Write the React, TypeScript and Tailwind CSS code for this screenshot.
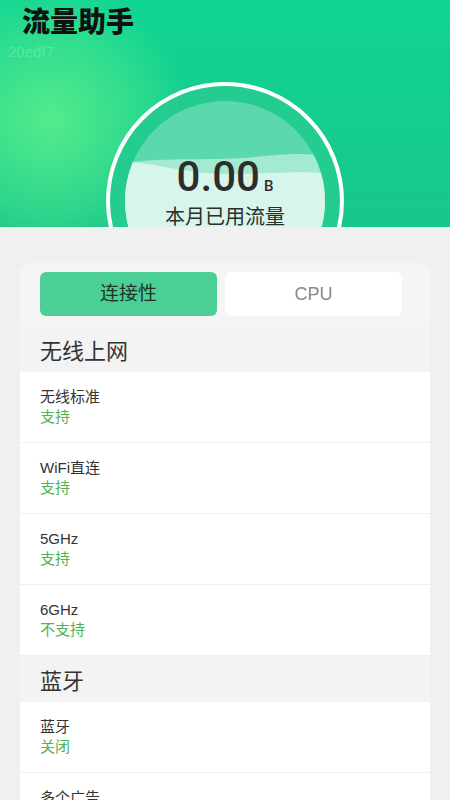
import React from "react";

type Row = { label: string; value: string };

const wifiRows: Row[] = [
  { label: "无线标准", value: "支持" },
  { label: "WiFi直连", value: "支持" },
  { label: "5GHz", value: "支持" },
  { label: "6GHz", value: "不支持" },
];

const btRows: Row[] = [
  { label: "蓝牙", value: "关闭" },
  { label: "多个广告", value: "支持" },
  { label: "低功耗", value: "支持" },
];

function SectionTitle({ title }: { title: string }) {
  return (
    <div className="h-[46px] flex items-center pt-[5px] px-[20px] bg-[#f3f3f3] text-[22px] leading-[28px] text-[#333]">
      {title}
    </div>
  );
}

function InfoRow({ row }: { row: Row }) {
  return (
    <div className="h-[71px] bg-white border-b border-[#f0f0f0] px-[20px] pt-[15px] flex flex-col">
      <div className="text-[15px] leading-[20px] text-[#333]">{row.label}</div>
      <div className="text-[15px] leading-[20px] text-[#4fb34f]">{row.value}</div>
    </div>
  );
}

function Gauge() {
  return (
    <div className="mx-auto w-[238px] h-[238px] shrink-0 rounded-full border-[4px] border-white bg-[#24cc8f] p-[15px]">
      <div className="relative w-full h-full rounded-full overflow-hidden bg-[#5bd8ad]">
        <svg className="absolute inset-0" width="200" height="200" viewBox="0 0 200 200">
          <path
            d="M0,62 C40,56 90,60 130,56 C165,52 188,52 200,56 L200,200 L0,200 Z"
            fill="#a4e9d1"
          />
          <path
            d="M0,60 C30,63 70,73 100,73 C140,73 170,70 200,72 L200,200 L0,200 Z"
            fill="#d7f5ea"
          />
        </svg>
        <div className="relative flex flex-col items-center pt-[55px]">
          <div className="flex items-baseline">
            <span className="font-['Roboto',sans-serif] font-medium text-[42px] leading-[42px] text-[#2d2d2d]">
              0.00
            </span>
            <span className="font-['Roboto',sans-serif] font-medium text-[15px] leading-[15px] text-[#2d2d2d] ml-[4px]">
              B
            </span>
          </div>
          <div className="mt-[9px] text-[20px] leading-[20px] text-[#2d2d2d]">本月已用流量</div>
        </div>
      </div>
    </div>
  );
}

export default function App() {
  return (
    <div className="w-[450px] h-[800px] overflow-hidden bg-[#f0f0f0] font-['Liberation_Sans','Noto_Sans_CJK_SC',sans-serif]">
      <div className="relative h-[227px] overflow-hidden bg-linear-to-b from-[#10d592] to-[#17c78a]">
        <div className="absolute left-[-90px] top-[-20px] w-[280px] h-[280px] rounded-full bg-[radial-gradient(circle,rgba(96,240,140,0.85)_0%,rgba(96,240,140,0.35)_45%,rgba(96,240,140,0)_70%)]" />
        <div className="relative flex flex-col">
          <div className="pl-[22px] pt-[8px] text-[28px] leading-[30px] font-black text-[#111]">流量助手</div>
          <div className="pl-[8px] mt-[5px] text-[15px] leading-[18px] text-white/20">20edf7</div>
          <div className="mt-[21px]">
            <Gauge />
          </div>
        </div>
      </div>

      <div className="mx-[20px] mt-[36px] rounded-[10px] bg-[#f5f5f5] overflow-hidden">
        <div className="flex gap-[8px] pl-[20px] pr-[28px] pt-[9px]">
          <div className="flex-1 h-[44px] rounded-[6px] bg-[#4bcf94] flex items-center justify-center text-[19px] text-[#1f3329]">
            连接性
          </div>
          <div className="flex-1 h-[44px] rounded-[6px] bg-white flex items-center justify-center text-[18px] text-[#8a8a8a]">
            CPU
          </div>
        </div>
        <div className="mt-[10px]">
          <SectionTitle title="无线上网" />
          {wifiRows.map((r) => (
            <InfoRow key={r.label} row={r} />
          ))}
          <SectionTitle title="蓝牙" />
          {btRows.map((r) => (
            <InfoRow key={r.label} row={r} />
          ))}
        </div>
      </div>
    </div>
  );
}
